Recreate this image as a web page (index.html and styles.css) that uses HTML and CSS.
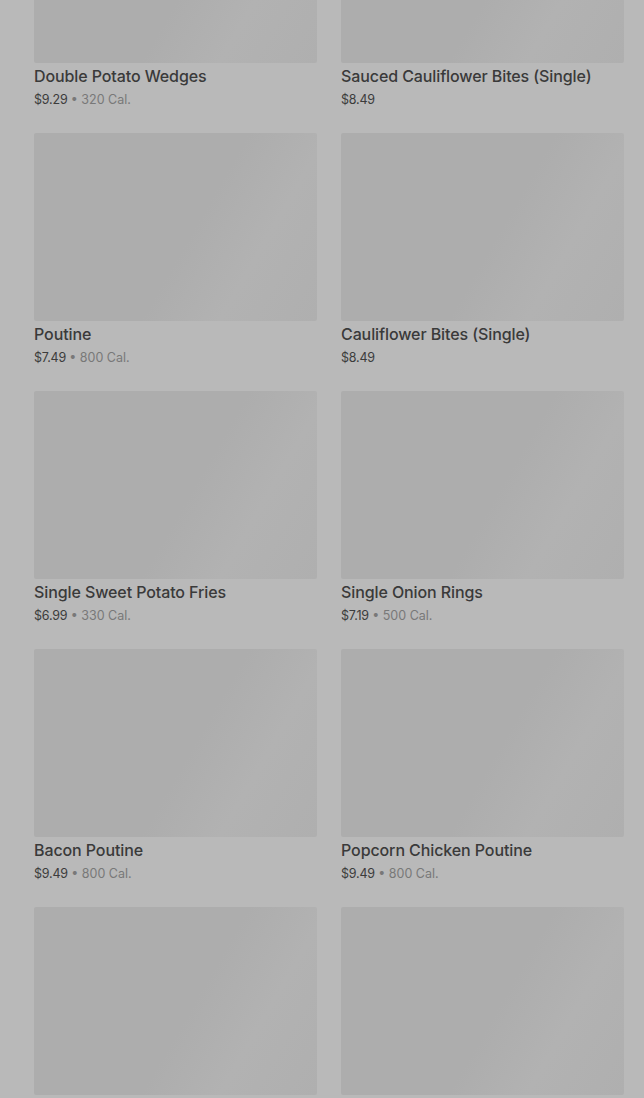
FILE: index.html
```html
<!DOCTYPE html>
<html>
<head>
<meta charset="utf-8">
<link rel="stylesheet" href="styles.css">
</head>
<body>
<main class="grid">
  <div class="card"><div class="thumb"></div><div class="title">Double Potato Wedges</div><div class="meta"><span class="price">$9.29</span> <span class="cal">• 320 Cal.</span></div></div>
  <div class="card"><div class="thumb"></div><div class="title">Sauced Cauliflower Bites (Single)</div><div class="meta"><span class="price">$8.49</span></div></div>
  <div class="card"><div class="thumb"></div><div class="title">Poutine</div><div class="meta"><span class="price">$7.49</span> <span class="cal">• 800 Cal.</span></div></div>
  <div class="card"><div class="thumb"></div><div class="title">Cauliflower Bites (Single)</div><div class="meta"><span class="price">$8.49</span></div></div>
  <div class="card"><div class="thumb"></div><div class="title">Single Sweet Potato Fries</div><div class="meta"><span class="price">$6.99</span> <span class="cal">• 330 Cal.</span></div></div>
  <div class="card"><div class="thumb"></div><div class="title">Single Onion Rings</div><div class="meta"><span class="price">$7.19</span> <span class="cal">• 500 Cal.</span></div></div>
  <div class="card"><div class="thumb"></div><div class="title">Bacon Poutine</div><div class="meta"><span class="price">$9.49</span> <span class="cal">• 800 Cal.</span></div></div>
  <div class="card"><div class="thumb"></div><div class="title">Popcorn Chicken Poutine</div><div class="meta"><span class="price">$9.49</span> <span class="cal">• 800 Cal.</span></div></div>
  <div class="card"><div class="thumb"></div></div>
  <div class="card"><div class="thumb"></div></div>
</main>
</body>
</html>
```
FILE: styles.css
```css
html, body {
  margin: 0;
  padding: 0;
  background: #b9b9b9;
  overflow: hidden;
  height: 1098px;
}
body {
  font-family: Inter, Roboto, "Noto Sans", Arial, sans-serif;
}
.grid {
  display: grid;
  grid-template-columns: 283px 283px;
  column-gap: 24px;
  row-gap: 0;
  margin: -125px 0 0 34px;
}
.card {
  height: 258px;
  display: flex;
  flex-direction: column;
}
.thumb {
  flex: none;
  height: 188px;
  border-radius: 2px;
  background: linear-gradient(120deg, #adadad 0%, #adadad 55%, #b2b2b2 75%, #afafaf 100%);
}
.title {
  margin-top: 3px;
  font-size: 16px;
  line-height: 20px;
  font-weight: 500;
  color: #3a3a3a;
  white-space: nowrap;
  letter-spacing: -0.1px;
}
.meta {
  margin-top: 5px;
  font-size: 12.5px;
  line-height: 18px;
  color: #3c3c3c;
  letter-spacing: -0.2px;
}
.cal {
  color: #787878;
  letter-spacing: 0;
}
.cal::first-letter {
  font-size: 10px;
}
```
